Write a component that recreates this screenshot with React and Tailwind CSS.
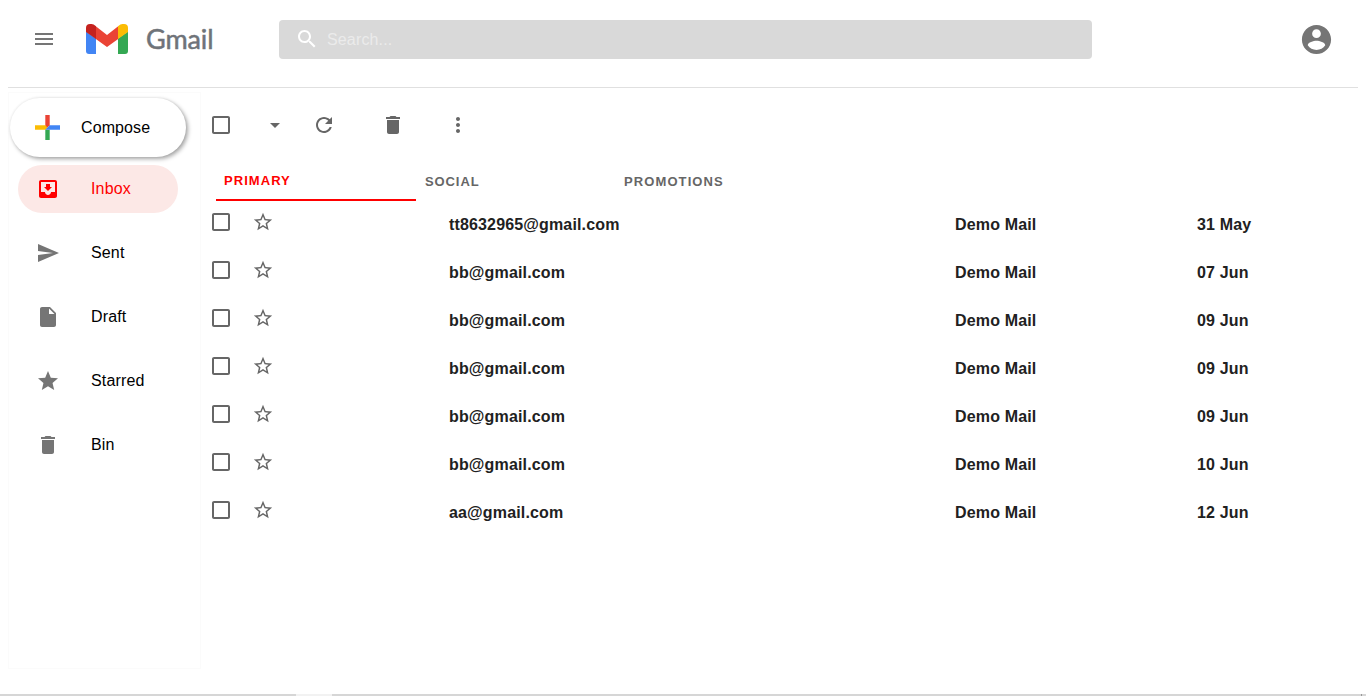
import React from "react";

const paths = {
  menu: "M3 18h18v-2H3v2zm0-5h18v-2H3v2zm0-7v2h18V6H3z",
  search:
    "M15.5 14h-.79l-.28-.27C15.41 12.59 16 11.11 16 9.5 16 5.91 13.09 3 9.5 3S3 5.91 3 9.5 5.91 16 9.5 16c1.61 0 3.09-.59 4.23-1.57l.27.28v.79l5 4.99L20.49 19l-4.99-5zm-6 0C7.01 14 5 11.99 5 9.5S7.01 5 9.5 5 14 7.01 14 9.5 11.99 14 9.5 14z",
  account:
    "M12 2C6.48 2 2 6.48 2 12s4.48 10 10 10 10-4.48 10-10S17.52 2 12 2zm0 3c1.66 0 3 1.34 3 3s-1.34 3-3 3-3-1.34-3-3 1.34-3 3-3zm0 14.200c-2.500 0-4.710-1.280-6-3.220.030-1.990 4-3.080 6-3.080 1.990 0 5.970 1.090 6 3.080-1.290 1.940-3.500 3.220-6 3.220z",
  inbox:
    "M19 3H4.990c-1.110 0-1.980.9-1.980 2L3 19c0 1.100.880 2 1.990 2H19c1.100 0 2-.9 2-2V5c0-1.100-.9-2-2-2zm0 12h-4c0 1.660-1.350 3-3 3s-3-1.340-3-3H4.990V5H19v10zm-3-5h-2V7h-4v3H8l4 4 4-4z",
  send: "M2.010 21L23 12 2.010 3 2 10l15 2-15 2z",
  file: "M6 2c-1.100 0-1.990.9-1.990 2L4 20c0 1.100.890 2 1.990 2H18c1.100 0 2-.9 2-2V8l-6-6H6zm7 7V3.500L18.500 9H13z",
  star: "M12 17.270L18.180 21l-1.640-7.030L22 9.240l-7.190-.61L12 2 9.190 8.630 2 9.240l5.460 4.730L5.820 21z",
  trash: "M6 19c0 1.100.9 2 2 2h8c1.100 0 2-.9 2-2V7H6v12zM19 4h-3.500l-1-1h-5l-1 1H5v2h14V4z",
  checkbox:
    "M19 5v14H5V5h14m0-2H5c-1.100 0-2 .9-2 2v14c0 1.100.9 2 2 2h14c1.100 0 2-.9 2-2V5c0-1.100-.9-2-2-2z",
  dropdown: "M7 10l5 5 5-5z",
  refresh:
    "M17.650 6.350C16.200 4.900 14.210 4 12 4c-4.420 0-7.990 3.580-7.990 8s3.570 8 7.990 8c3.730 0 6.840-2.550 7.730-6h-2.080c-.82 2.330-3.040 4-5.650 4-3.310 0-6-2.690-6-6s2.690-6 6-6c1.660 0 3.140.69 4.220 1.780L13 11h7V4l-2.350 2.350z",
  more: "M12 8c1.100 0 2-.9 2-2s-.9-2-2-2-2 .9-2 2 .9 2 2 2zm0 2c-1.100 0-2 .9-2 2s.9 2 2 2 2-.9 2-2-.9-2-2-2zm0 6c-1.100 0-2 .9-2 2s.9 2 2 2 2-.9 2-2-.9-2-2-2z",
  starBorder:
    "M22 9.240l-7.190-.62L12 2 9.190 8.630 2 9.240l5.460 4.730L5.820 21 12 17.270 18.180 21l-1.630-7.030L22 9.240zM12 15.400l-3.760 2.270 1-4.280-3.320-2.880 4.380-.38L12 6.100l1.710 4.040 4.380.38-3.320 2.880 1 4.280L12 15.400z",
};

function Icon({ name, className = "size-6 text-[#666666]" }) {
  return (
    <svg viewBox="0 0 24 24" fill="currentColor" className={`shrink-0 ${className}`}>
      <path d={paths[name]} />
    </svg>
  );
}

function GmailMark() {
  return (
    <svg viewBox="0 0 42 30" className="h-[30px] w-[42px] shrink-0">
      <path fill="#4285f4" d="M0 7.500L10 14.500V30H3Q0 30 0 27z" />
      <path fill="#34a853" d="M42 7.500L32 14.500V30H39Q42 30 42 27z" />
      <path fill="#ea4335" d="M9.500 1.900L21 11L32.500 1.900V14.800L21 23L9.500 14.800z" />
      <path fill="#c5221f" d="M0 8V4Q0 0 4 0H5.500Q7.500 0 10 2.300V15z" />
      <path fill="#fbbc04" d="M42 8V4Q42 0 38 0H36.500Q34.500 0 32 2.300V15z" />
    </svg>
  );
}

function ComposeMark() {
  return (
    <svg viewBox="0 0 25 25" className="size-[25px] shrink-0">
      <path fill="#ea4335" d="M10.300 0h4.400v10.300l-4.400 4.400z" />
      <path fill="#fbbc04" d="M0 10.300h10.300l2.200 2.200-2.200 2.200H0z" />
      <path fill="#34a853" d="M10.300 14.700h4.400V25h-4.400z" />
      <path fill="#4285f4" d="M14.700 10.300H25v4.400H10.300z" />
    </svg>
  );
}

const folders = [
  { label: "Inbox", icon: "inbox", active: true },
  { label: "Sent", icon: "send" },
  { label: "Draft", icon: "file" },
  { label: "Starred", icon: "star" },
  { label: "Bin", icon: "trash" },
];

const mails = [
  ["tt8632965@gmail.com", "31 May"],
  ["bb@gmail.com", "07 Jun"],
  ["bb@gmail.com", "09 Jun"],
  ["bb@gmail.com", "09 Jun"],
  ["bb@gmail.com", "09 Jun"],
  ["bb@gmail.com", "10 Jun"],
  ["aa@gmail.com", "12 Jun"],
];

function Header() {
  return (
    <header className="mx-2 flex h-[88px] items-start border-b border-[#e0e0e0]">
      <Icon name="menu" className="mt-[27px] ml-6 size-6 text-[#757575]" />
      <div className="mt-6 ml-[30px] flex h-[30px] w-[193px] items-center gap-[18px]">
        <GmailMark />
        <span className="font-['Lato',sans-serif] text-[27px] leading-[30px] tracking-[-0.1px] text-[#6f7379] [-webkit-text-stroke:0.5px_#6f7379]">
          Gmail
        </span>
      </div>
      <div className="mt-5 flex h-[39px] w-[813px] items-center rounded bg-[#d9d9d9] pl-4">
        <Icon name="search" className="-mt-px size-6 text-white" />
        <input
          placeholder="Search..."
          className="ml-2 w-96 bg-transparent text-base tracking-[0.15px] outline-none placeholder:text-[#ebebeb]"
        />
      </div>
      <Icon name="account" className="mt-[22px] mr-6 ml-auto size-[35px] text-[#757575]" />
    </header>
  );
}

function Sidebar() {
  return (
    <aside className="mt-1 ml-2 h-[577px] w-[193px] shrink-0 border border-[#fbfbfb] pt-[5px]">
      <button className="ml-px flex h-[59px] w-[176px] items-center rounded-full bg-white pl-[25px] text-base text-black shadow-[2px_2px_4px_rgba(0,0,0,0.35),0_0_3px_rgba(0,0,0,0.08)]">
        <ComposeMark />
        <span className="ml-[21px] tracking-[0.1px]">Compose</span>
      </button>
      <nav className="mt-2 ml-[9px] flex flex-col gap-4">
        {folders.map((f) => (
          <a
            key={f.label}
            className={`flex h-12 w-40 items-center rounded-full pl-[18px] ${f.active ? "bg-[#fce8e6] text-[#ff0000]" : "text-black"}`}
          >
            <Icon name={f.icon} className={f.active ? "size-6 text-[#ff0000]" : "size-6 text-[#757575]"} />
            <span className="ml-[31px] pb-px text-base tracking-[0.15px]">{f.label}</span>
          </a>
        ))}
      </nav>
    </aside>
  );
}

function Toolbar() {
  return (
    <div className="flex h-6 items-center">
      <Icon name="checkbox" />
      <Icon name="dropdown" className="ml-[30px] size-6 text-[#666666]" />
      <Icon name="refresh" className="ml-[25px] size-6 text-[#666666]" />
      <Icon name="trash" className="ml-[45px] size-6 text-[#666666]" />
      <Icon name="more" className="ml-[41px] size-6 text-[#666666]" />
    </div>
  );
}

function Tabs() {
  return (
    <div className="mt-6 ml-[7px] flex h-10 text-[13px] leading-5 font-bold text-[#666666]">
      <div className="w-[200px] border-b-2 border-[#ff0000] pt-2.5 pl-2 tracking-[1.05px] text-[#ff0000]">PRIMARY</div>
      <div className="w-[200px] pt-[11px] pl-[9px] tracking-[0.9px]">SOCIAL</div>
      <div className="w-[200px] pt-[11px] pl-2 tracking-[1.1px]">PROMOTIONS</div>
    </div>
  );
}

export default function App() {
  return (
    <div className="flex h-[696px] w-[1366px] flex-col overflow-hidden bg-white font-['Liberation_Sans',Arial,sans-serif]">
      <Header />
      <div className="flex min-h-0 flex-1">
        <Sidebar />
        <main className="ml-2 flex-1 pt-[25px]">
          <Toolbar />
          <Tabs />
          <ul className="mt-[9px]">
            {mails.map(([from, date], i) => (
              <li key={i} className="flex h-12 items-start text-base leading-6 font-bold tracking-[0.15px] text-[#212121]">
                <Icon name="checkbox" />
                <Icon name="starBorder" className="mt-px ml-[19px] size-[22px] text-[#666666]" />
                <span className="ml-[175px] w-[506px] pt-[3px]">{from}</span>
                <span className="w-[242px] pt-[3px]">Demo Mail</span>
                <span className="pt-[3px]">{date}</span>
              </li>
            ))}
          </ul>
        </main>
      </div>
      <footer className="flex h-0.5 bg-[#d6d6d6]">
        <div className="ml-[296px] w-9 bg-[#f2f2f2]" />
        <div className="mr-1 ml-auto w-px bg-[#999999]" />
      </footer>
    </div>
  );
}
